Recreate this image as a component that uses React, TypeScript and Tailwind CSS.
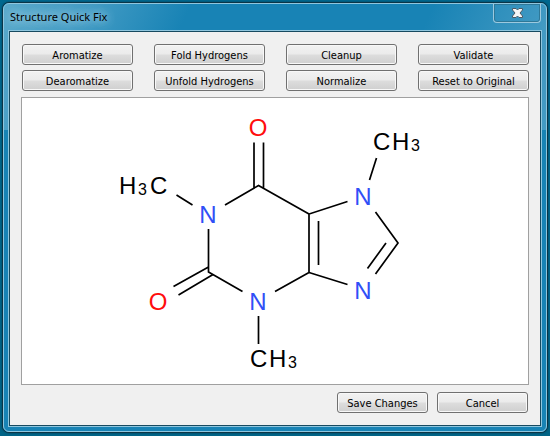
import type { ReactNode } from "react";

const structureActions = [
  "Aromatize",
  "Fold Hydrogens",
  "Cleanup",
  "Validate",
  "Dearomatize",
  "Unfold Hydrogens",
  "Normalize",
  "Reset to Original",
];

function PushButton({ children, className = "" }: { children: ReactNode; className?: string }) {
  return (
    <button
      type="button"
      className={`flex h-[21px] items-center justify-center whitespace-nowrap rounded-[3px] border border-[#707070] bg-[linear-gradient(#f2f2f2_0%,#ebebeb_48%,#dddddd_52%,#cfcfcf_100%)] pt-[2px] font-['DejaVu_Sans_Condensed','DejaVu_Sans',sans-serif] text-[11px] leading-4 text-black shadow-[inset_0_0_0_1px_#f8f8f8] ${className}`}
    >
      {children}
    </button>
  );
}

function TitleBar() {
  return (
    <header className="flex h-[26px] items-start justify-between pl-[2px] pr-px">
      <h1 className="mt-[4px] whitespace-nowrap font-['Noto_Sans',sans-serif] text-[11px] leading-[18px] text-black [text-shadow:0_0_8px_#c4e0ee,0_0_12px_#a9d2e6]">
        Structure Quick Fix
      </h1>
      <button
        type="button"
        aria-label="Close"
        className="flex h-[19px] w-[48px] items-center justify-center rounded-b-[4px] border border-t-0 border-[#9cc9df] shadow-[inset_0_0_0_1px_#2e7898]"
      >
        <svg width="13" height="12" viewBox="0 0 13 12" aria-hidden="true">
          <path
            d="M1.500 1.500h3.500l1.500 1.500 1.500-1.500h3.500v1.500L9 6l2.500 3v1.500H8L6.500 9 5 10.500H1.500V9L4 6 1.500 3z"
            fill="#f6f6f6"
            stroke="#4c5a66"
            strokeWidth="1"
          />
        </svg>
      </button>
    </header>
  );
}

function CaffeineStructure() {
  return (
    <svg
      role="img"
      aria-label="Caffeine"
      viewBox="22 98 506 286"
      className="block h-auto w-full font-['Liberation_Sans',Arial,sans-serif] text-[24px]"
    >
      <g fill="none" stroke="#000" strokeWidth="1.7">
        <path d="M176.500 195 192.500 205M225 205 258.500 185.500 309 214M254 188V142.500M263.500 188V142.500" />
        <path d="M208.500 229V272L242.500 291.500M275 291.500 309 272.500M208.500 267 173.500 286.500M213 274.500 178.500 295" />
        <path d="M309 272.500V214L347.500 201.500M318.500 221V265M309 272.500 347.500 284.500" />
        <path d="M375.500 212 398 243 375.500 274M386 243 367.500 268.500M369.500 180 376.500 158M258.500 316V344" />
      </g>
      <g fill="#000">
        <text x="119" y="194">H</text>
        <text x="138" y="195" className="text-[16px]">3</text>
        <text x="150" y="194">C</text>
        <text x="373" y="150">C</text>
        <text x="392" y="150">H</text>
        <text x="411" y="151" className="text-[16px]">3</text>
        <text x="250" y="367">C</text>
        <text x="269" y="367">H</text>
        <text x="288" y="368" className="text-[16px]">3</text>
      </g>
      <g fill="#304ff7" textAnchor="middle">
        <text x="208" y="223">N</text>
        <text x="258" y="310">N</text>
        <text x="363" y="205">N</text>
        <text x="363" y="299">N</text>
      </g>
      <g fill="#ff0d0d" textAnchor="middle">
        <text x="258" y="136">O</text>
        <text x="158" y="310">O</text>
      </g>
    </svg>
  );
}

export default function App() {
  return (
    <div className="min-h-screen bg-[linear-gradient(#00688f,#006486)] px-[2px] pt-[2px] pb-[3px]">
      <main className="rounded-[7px] border border-[#0b3547] bg-[#1883b5] shadow-[0_0_2px_#00384d]">
        <div className="rounded-[6px] border border-[#8fc6de] bg-[#1883b5] bg-[linear-gradient(115deg,#5aa9cb_0px,#429bc4_80px,#1883b5_170px,#1883b5_390px,#429ac3_500px,#429ac3_100%)] bg-[length:100%_126px] bg-no-repeat px-[4px] pb-[4px]">
          <TitleBar />
          <div className="border border-[#8fc6de]">
            <div className="border border-[#174a60] bg-[#f0f0f0] pt-[12px] pr-[11px] pb-[12px] pl-[11px]">
              <div className="grid grid-cols-4 gap-x-[21px] gap-y-[5px] pl-px">
                {structureActions.map((label) => (
                  <PushButton key={label}>{label}</PushButton>
                ))}
              </div>
              <section className="mt-[6px] border border-[#a0a0a0] bg-white">
                <CaffeineStructure />
              </section>
              <div className="mt-[7px] flex justify-end gap-[9px] pr-px">
                <PushButton className="w-[91px]">Save Changes</PushButton>
                <PushButton className="w-[91px]">Cancel</PushButton>
              </div>
            </div>
          </div>
        </div>
      </main>
    </div>
  );
}
